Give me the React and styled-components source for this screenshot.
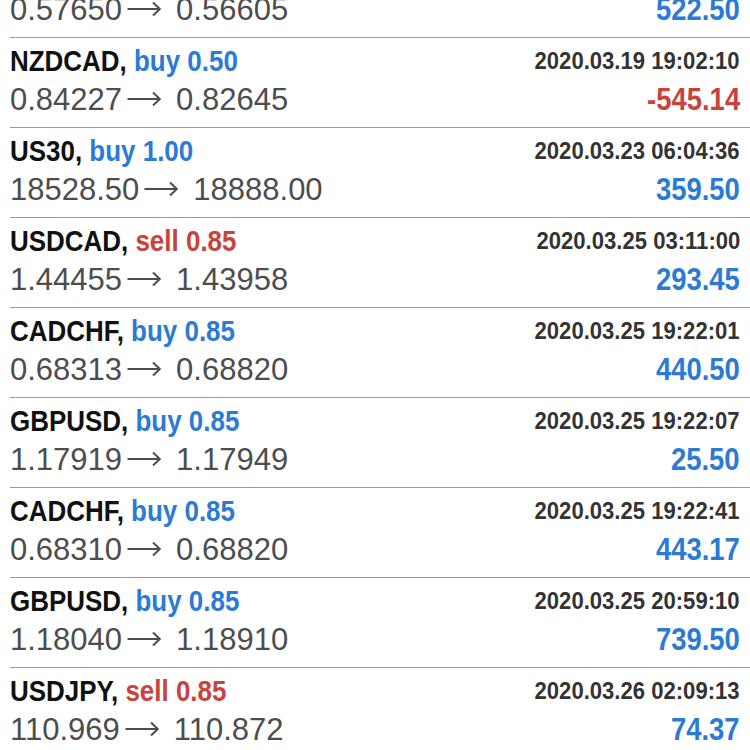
import React from "react";
import styled, { createGlobalStyle } from "styled-components";

const Global = createGlobalStyle`
  html, body { margin: 0; padding: 0; background: #ffffff; overflow: hidden; height: 750px; }
  body { font-family: "Liberation Sans", Arial, sans-serif; }
`;

const List = styled.div`
  width: 750px;
  display: flex;
  flex-direction: column;
  margin-top: -52px;
`;

const Row = styled.div`
  margin-left: 10px;
  padding-right: 10px;
  height: 89px;
  border-bottom: 1px solid #9a9a9a;
  display: grid;
  grid-template-rows: 42px 47px;
  flex-shrink: 0;
`;

const TopLine = styled.div`
  display: flex;
  justify-content: space-between;
  align-items: center;
  padding-top: 4px;
`;

const BottomLine = styled.div`
  display: flex;
  justify-content: space-between;
  align-items: baseline;
  line-height: 40px;
`;

const Condensed = styled.span`
  display: inline-block;
  font-family: "Liberation Sans", Arial, sans-serif;
  font-weight: 700;
  white-space: nowrap;
`;

const Title = styled(Condensed)`
  font-size: 30px;
  color: #111111;
  line-height: 40px;
  transform: scaleX(0.865);
  transform-origin: left center;
`;

const Side = styled.span`
  color: ${(p) => (p.$sell ? "#c8443a" : "#2b7bd4")};
`;

const Time = styled(Condensed)`
  font-size: 23px;
  color: #333333;
  transform: scaleX(0.96);
  transform-origin: right center;
`;

const Price = styled.span`
  font-family: "Liberation Sans", Arial, sans-serif;
  font-size: 31px;
  color: #4d4d4d;
  white-space: nowrap;
`;

const ArrowIcon = styled.svg`
  width: 34px;
  height: 16px;
  margin: 0 15px 0 5px;
  vertical-align: 3px;
  overflow: visible;
`;

const Arrow = () => (
  <ArrowIcon viewBox="0 0 34 16" aria-hidden="true">
    <path d="M0.5 8 H32.5 M26 1.5 L32.8 8 L26 14.5" fill="none" stroke="#4d4d4d" strokeWidth="2" strokeLinecap="butt" strokeLinejoin="miter" />
  </ArrowIcon>
);

const Profit = styled(Condensed)`
  font-size: 31px;
  color: ${(p) => (p.$neg ? "#c8443a" : "#2b7bd4")};
  transform: scaleX(0.885);
  transform-origin: right center;
`;

const trades = [
  { sym: "AUDUSD", side: "buy", vol: "0.50", time: "2020.03.18 10:00:00", from: "0.57650", to: "0.56605", profit: "522.50" },
  { sym: "NZDCAD", side: "buy", vol: "0.50", time: "2020.03.19 19:02:10", from: "0.84227", to: "0.82645", profit: "-545.14" },
  { sym: "US30", side: "buy", vol: "1.00", time: "2020.03.23 06:04:36", from: "18528.50", to: "18888.00", profit: "359.50" },
  { sym: "USDCAD", side: "sell", vol: "0.85", time: "2020.03.25 03:11:00", from: "1.44455", to: "1.43958", profit: "293.45" },
  { sym: "CADCHF", side: "buy", vol: "0.85", time: "2020.03.25 19:22:01", from: "0.68313", to: "0.68820", profit: "440.50" },
  { sym: "GBPUSD", side: "buy", vol: "0.85", time: "2020.03.25 19:22:07", from: "1.17919", to: "1.17949", profit: "25.50" },
  { sym: "CADCHF", side: "buy", vol: "0.85", time: "2020.03.25 19:22:41", from: "0.68310", to: "0.68820", profit: "443.17" },
  { sym: "GBPUSD", side: "buy", vol: "0.85", time: "2020.03.25 20:59:10", from: "1.18040", to: "1.18910", profit: "739.50" },
  { sym: "USDJPY", side: "sell", vol: "0.85", time: "2020.03.26 02:09:13", from: "110.969", to: "110.872", profit: "74.37" },
];

export default function App() {
  return (
    <>
      <Global />
      <List>
        {trades.map((t, i) => (
          <Row key={i}>
            <TopLine>
              <Title>
                {t.sym}, <Side $sell={t.side === "sell"}>{t.side} {t.vol}</Side>
              </Title>
              <Time>{t.time}</Time>
            </TopLine>
            <BottomLine>
              <Price>
                {t.from}
                <Arrow />
                {t.to}
              </Price>
              <Profit $neg={t.profit.startsWith("-")}>{t.profit}</Profit>
            </BottomLine>
          </Row>
        ))}
      </List>
    </>
  );
}
